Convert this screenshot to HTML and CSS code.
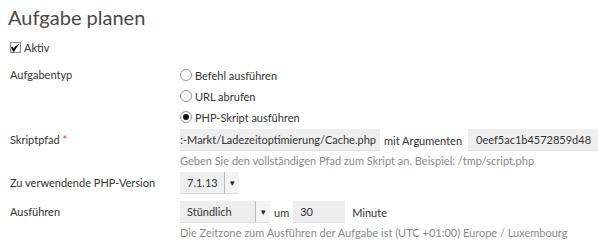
FILE: index.html
```html
<!DOCTYPE html>
<html lang="de">
<head>
    <meta charset="UTF-8">
    <title>Aufgabe planen</title>
    <link rel="stylesheet" href="styles.css">
</head>
<body>
    <h2 class="title">Aufgabe planen</h2>
    <div class="active-row">
        <span class="check">
            <svg width="9" height="9" viewBox="0 0 9 9"><path d="M0.5 4.5 L3 8.5 L8.5 0.5 L3.5 4 L3 6 Z" fill="#000"/><path d="M0.8 4 L3 8.3" stroke="#000" stroke-width="1.8"/></svg>
        </span>
        <span>Aktiv</span>
    </div>

    <div class="form">
        <!-- Aufgabentyp -->
        <div class="row r-type">
            <label class="lbl">Aufgabentyp</label>
            <div class="field">
                <div class="radios">
                    <div class="radio"><span class="dot"></span>Befehl ausführen</div>
                    <div class="radio"><span class="dot"></span>URL abrufen</div>
                    <div class="radio"><span class="dot on"></span>PHP-Skript ausführen</div>
                </div>
            </div>
        </div>

        <!-- Skriptpfad -->
        <div class="row r-path">
            <label class="lbl">Skriptpfad <span class="req">*</span></label>
            <div class="field">
                <div class="line">
                    <div class="input path"><span>:-Markt/Ladezeitoptimierung/Cache.php</span></div>
                    <span class="txt">mit Argumenten</span>
                    <div class="input args">0eef5ac1b4572859d48</div>
                </div>
                <div class="hint">Geben Sie den vollständigen Pfad zum Skript an. Beispiel: /tmp/script.php</div>
            </div>
        </div>

        <!-- PHP-Version -->
        <div class="row r-ver">
            <label class="lbl">Zu verwendende PHP-Version</label>
            <div class="field">
                <div class="select ver"><span class="val">7.1.13</span><span class="arr">▾</span></div>
            </div>
        </div>

        <!-- Ausführen -->
        <div class="row">
            <label class="lbl">Ausführen</label>
            <div class="field">
                <div class="line">
                    <div class="select freq"><span class="val">Stündlich</span><span class="arr">▾</span></div>
                    <span class="txt">um</span>
                    <div class="input min">30</div>
                    <span class="txt">Minute</span>
                </div>
                <div class="hint">Die Zeitzone zum Ausführen der Aufgabe ist (UTC +01:00) Europe / Luxembourg</div>
            </div>
        </div>
    </div>
</body>
</html>
```

FILE: styles.css
```css
*{
    margin: 0;
    padding: 0;
    box-sizing: border-box;
}
body{
    font-family: Lato, "Open Sans", sans-serif;
    font-size: 11px;
    color: #333;
    background: #fff;
    padding: 0 8px;
    overflow: hidden;
}
.title{
    font-size: 20px;
    font-weight: 400;
    color: #484848;
    line-height: 26px;
    padding-top: 4px;
}
.active-row{
    display: flex;
    align-items: center;
    gap: 3px;
    margin-top: 10px;
    margin-left: 2px;
    height: 14px;
}
.check{
    width: 11px;
    height: 11px;
    border: 1px solid #888;
    display: flex;
    align-items: center;
    justify-content: center;
    background: #fff;
}
.form{
    margin-top: 14px;
}
.row{
    display: flex;
    align-items: flex-start;
}
.r-type{
    margin-bottom: 5px;
}
.r-path{
    margin-bottom: 4px;
}
.r-ver{
    margin-bottom: 7px;
}
.lbl{
    width: 172px;
    padding-left: 2px;
    line-height: 14px;
    flex: none;
}
.r-path .lbl,
.r-ver .lbl,
.row .lbl{
    padding-top: 4px;
}
.r-type .lbl{
    padding-top: 0;
}
.req{
    color: #d9312b;
}
.field{
    flex: 1;
    min-width: 0;
}
.radios{
    display: flex;
    flex-direction: column;
    gap: 7px;
}
.radio{
    display: flex;
    align-items: center;
    height: 14px;
    gap: 3px;
}
.dot{
    width: 12px;
    height: 12px;
    border: 1px solid #999;
    border-radius: 50%;
    display: inline-flex;
    align-items: center;
    justify-content: center;
    background: #fff;
}
.dot.on::after{
    content: "";
    width: 6px;
    height: 6px;
    border-radius: 50%;
    background: #111;
}
.line{
    display: flex;
    align-items: center;
    gap: 4px;
    white-space: nowrap;
}
.input,
.select{
    height: 22px;
    background: #eee;
    border-bottom: 1px solid #ddd;
    display: flex;
    align-items: center;
    padding: 0 5px;
    color: #333;
    white-space: nowrap;
    overflow: hidden;
    flex: none;
}
.path{
    width: 200px;
    justify-content: flex-end;
    padding-right: 4px;
}
.args{
    width: 140px;
    margin-left: 2px;
    padding-left: 8px;
}
.min{
    width: 52px;
    padding-left: 7px;
    margin-right: 3px;
}
.hint{
    color: #8a8a8a;
    margin-top: 3px;
    line-height: 14px;
}
.select{
    padding: 0;
}
.select .val{
    flex: 1;
    padding-left: 7px;
}
.select .arr{
    width: 15px;
    height: 22px;
    border-left: 1px solid #bbb;
    display: flex;
    align-items: center;
    justify-content: center;
    font-size: 9px;
    color: #222;
    background: #f4f4f4;
}
.ver{
    width: 59px;
}
.freq{
    width: 90px;
}
```
